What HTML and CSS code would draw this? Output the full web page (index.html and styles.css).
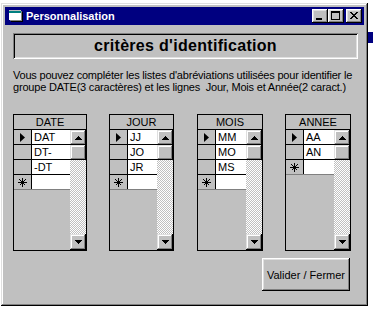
FILE: index.html
```html
<!DOCTYPE html>
<html lang="fr">
<head>
<meta charset="utf-8">
<title>Personnalisation</title>
<link rel="stylesheet" href="styles.css">
</head>
<body>
<div class="screen">
  <div class="window">
    <div class="titlebar">
      <svg class="appicon" width="14" height="12" viewBox="0 0 14 12" shape-rendering="crispEdges">
        <rect x="0" y="0" width="12" height="10" fill="#fff"/>
        <rect x="0" y="0" width="12" height="3" fill="#008080"/>
        <rect x="0" y="0" width="12" height="1" fill="#c0c0c0"/>
        <rect x="1" y="10" width="12" height="1" fill="#808080"/>
        <rect x="12" y="1" width="1" height="10" fill="#808080"/>
        <rect x="2" y="11" width="12" height="1" fill="#000"/>
        <rect x="13" y="2" width="1" height="10" fill="#000"/>
      </svg>
      <span class="title">Personnalisation</span>
      <div class="tbtns">
        <div class="tb"><svg width="16" height="14" viewBox="0 0 16 14" shape-rendering="crispEdges"><rect x="4" y="9" width="6" height="2" fill="#000"/></svg></div>
        <div class="tb"><svg width="16" height="14" viewBox="0 0 16 14" shape-rendering="crispEdges"><path d="M3 2h9v9H3z M4 4v6h7V4z" fill="#000" fill-rule="evenodd"/></svg></div>
        <div class="tb close"><svg width="16" height="14" viewBox="0 0 16 14" shape-rendering="crispEdges"><path d="M4 3h2v1h-2z M10 3h2v1h-2z M5 4h2v1h-2z M9 4h2v1h-2z M6 5h4v1h-4z M7 6h2v1h-2z M6 7h4v1h-4z M5 8h2v1h-2z M9 8h2v1h-2z M4 9h2v1h-2z M10 9h2v1h-2z" fill="#000"/></svg></div>
      </div>
    </div>

    <div class="content">
      <div class="heading">critères d'identification</div>
      <p class="intro">Vous pouvez compléter les listes d'abréviations utilisées pour identifier le<br>groupe DATE(3 caractères) et les lignes&nbsp; Jour, Mois et Année(2 caract.)</p>

      <div class="grids">
        <div class="grid g-date">
          <div class="ghead">DATE</div>
          <div class="gbody">
            <div class="rows">
              <div class="row"><div class="sel"><svg width="5" height="9" viewBox="0 0 5 9"><polygon points="0,0 5,4.5 0,9" fill="#000"/></svg></div><div class="cell">DAT</div></div>
              <div class="row"><div class="sel"></div><div class="cell">DT-</div></div>
              <div class="row"><div class="sel"></div><div class="cell">-DT</div></div>
              <div class="row new"><div class="sel"><svg width="9" height="9" viewBox="0 0 9 9" shape-rendering="crispEdges"><path d="M4.5 0v9M0 4.5h9M1.5 1.5l6 6M7.5 1.5l-6 6" stroke="#000" stroke-width="1"/><rect x="3" y="3" width="3" height="3" fill="#000"/></svg></div><div class="cell"></div></div>
            </div>
            <div class="vscroll">
              <div class="sbtn up"><svg width="7" height="4" viewBox="0 0 7 4" shape-rendering="crispEdges"><path d="M3 0h1v1H3z M2 1h3v1H2z M1 2h5v1H1z M0 3h7v1H0z" fill="#000"/></svg></div>
              <div class="thumb"></div>
              <div class="track"></div>
              <div class="sbtn down"><svg width="7" height="4" viewBox="0 0 7 4" shape-rendering="crispEdges"><path d="M0 0h7v1H0z M1 1h5v1H1z M2 2h3v1H2z M3 3h1v1H3z" fill="#000"/></svg></div>
            </div>
          </div>
        </div>

        <div class="grid g-jour">
          <div class="ghead">JOUR</div>
          <div class="gbody">
            <div class="rows">
              <div class="row"><div class="sel"><svg width="5" height="9" viewBox="0 0 5 9"><polygon points="0,0 5,4.5 0,9" fill="#000"/></svg></div><div class="cell">JJ</div></div>
              <div class="row"><div class="sel"></div><div class="cell">JO</div></div>
              <div class="row"><div class="sel"></div><div class="cell">JR</div></div>
              <div class="row new"><div class="sel"><svg width="9" height="9" viewBox="0 0 9 9" shape-rendering="crispEdges"><path d="M4.5 0v9M0 4.5h9M1.5 1.5l6 6M7.5 1.5l-6 6" stroke="#000" stroke-width="1"/><rect x="3" y="3" width="3" height="3" fill="#000"/></svg></div><div class="cell"></div></div>
            </div>
            <div class="vscroll">
              <div class="sbtn up"><svg width="7" height="4" viewBox="0 0 7 4" shape-rendering="crispEdges"><path d="M3 0h1v1H3z M2 1h3v1H2z M1 2h5v1H1z M0 3h7v1H0z" fill="#000"/></svg></div>
              <div class="thumb"></div>
              <div class="track"></div>
              <div class="sbtn down"><svg width="7" height="4" viewBox="0 0 7 4" shape-rendering="crispEdges"><path d="M0 0h7v1H0z M1 1h5v1H1z M2 2h3v1H2z M3 3h1v1H3z" fill="#000"/></svg></div>
            </div>
          </div>
        </div>

        <div class="grid g-mois">
          <div class="ghead">MOIS</div>
          <div class="gbody">
            <div class="rows">
              <div class="row"><div class="sel"><svg width="5" height="9" viewBox="0 0 5 9"><polygon points="0,0 5,4.5 0,9" fill="#000"/></svg></div><div class="cell">MM</div></div>
              <div class="row"><div class="sel"></div><div class="cell">MO</div></div>
              <div class="row"><div class="sel"></div><div class="cell">MS</div></div>
              <div class="row new"><div class="sel"><svg width="9" height="9" viewBox="0 0 9 9" shape-rendering="crispEdges"><path d="M4.5 0v9M0 4.5h9M1.5 1.5l6 6M7.5 1.5l-6 6" stroke="#000" stroke-width="1"/><rect x="3" y="3" width="3" height="3" fill="#000"/></svg></div><div class="cell"></div></div>
            </div>
            <div class="vscroll">
              <div class="sbtn up"><svg width="7" height="4" viewBox="0 0 7 4" shape-rendering="crispEdges"><path d="M3 0h1v1H3z M2 1h3v1H2z M1 2h5v1H1z M0 3h7v1H0z" fill="#000"/></svg></div>
              <div class="thumb"></div>
              <div class="track"></div>
              <div class="sbtn down"><svg width="7" height="4" viewBox="0 0 7 4" shape-rendering="crispEdges"><path d="M0 0h7v1H0z M1 1h5v1H1z M2 2h3v1H2z M3 3h1v1H3z" fill="#000"/></svg></div>
            </div>
          </div>
        </div>

        <div class="grid g-annee">
          <div class="ghead">ANNEE</div>
          <div class="gbody">
            <div class="rows">
              <div class="row"><div class="sel"><svg width="5" height="9" viewBox="0 0 5 9"><polygon points="0,0 5,4.5 0,9" fill="#000"/></svg></div><div class="cell">AA</div></div>
              <div class="row"><div class="sel"></div><div class="cell">AN</div></div>
              <div class="row new"><div class="sel"><svg width="9" height="9" viewBox="0 0 9 9" shape-rendering="crispEdges"><path d="M4.5 0v9M0 4.5h9M1.5 1.5l6 6M7.5 1.5l-6 6" stroke="#000" stroke-width="1"/><rect x="3" y="3" width="3" height="3" fill="#000"/></svg></div><div class="cell"></div></div>
            </div>
            <div class="vscroll">
              <div class="sbtn up"><svg width="7" height="4" viewBox="0 0 7 4" shape-rendering="crispEdges"><path d="M3 0h1v1H3z M2 1h3v1H2z M1 2h5v1H1z M0 3h7v1H0z" fill="#000"/></svg></div>
              <div class="thumb"></div>
              <div class="track"></div>
              <div class="sbtn down"><svg width="7" height="4" viewBox="0 0 7 4" shape-rendering="crispEdges"><path d="M0 0h7v1H0z M1 1h5v1H1z M2 2h3v1H2z M3 3h1v1H3z" fill="#000"/></svg></div>
            </div>
          </div>
        </div>
      </div>

      <div class="actions">
        <div class="btn">Valider / Fermer</div>
      </div>
    </div>
  </div>
  <div class="side"></div>
</div>
</body>
</html>
```

FILE: styles.css
```css
html, body {
  margin: 0;
  padding: 0;
}

body {
  background: #ffffff;
  font-family: "Liberation Sans", Arial, sans-serif;
  font-size: 11px;
  color: #000;
}

.screen {
  display: flex;
  align-items: flex-start;
}

.window {
  margin: 3px 0 0 1px;
  width: 367px;
  height: 303px;
  box-sizing: border-box;
  padding: 4px;
  background: #c0c0c0;
  box-shadow: inset -1px -1px #000, inset 1px 1px #dfdfdf, inset -2px -2px #808080, inset 2px 2px #fff;
  display: flex;
  flex-direction: column;
  flex: none;
}

.side {
  width: 5px;
  height: 11px;
  margin-top: 32px;
  background: #000080;
  flex: none;
}

/* title bar */
.titlebar {
  height: 18px;
  background: #000080;
  color: #fff;
  display: flex;
  align-items: center;
  flex: none;
}

.appicon {
  margin-left: 4px;
  display: block;
  flex: none;
}

.title {
  margin-left: 3px;
  font-weight: bold;
  font-size: 11px;
  line-height: 18px;
  white-space: nowrap;
}

.tbtns {
  margin-left: auto;
  display: flex;
  padding-right: 2px;
}

.tb {
  width: 16px;
  height: 14px;
  background: #c0c0c0;
  box-shadow: inset -1px -1px #000, inset 1px 1px #fff, inset -2px -2px #808080, inset 2px 2px #dfdfdf;
}

.tb svg {
  display: block;
}

.tb.close {
  margin-left: 2px;
}

/* content */
.content {
  padding: 8px 0 0 8px;
  display: flex;
  flex-direction: column;
  flex: 1;
}

.heading {
  width: 345px;
  height: 26px;
  box-sizing: border-box;
  box-shadow: inset 1px 1px #808080, inset -1px -1px #fff, inset 2px 2px #000, inset -2px -2px #dfdfdf;
  text-align: center;
  font-weight: bold;
  font-size: 16px;
  letter-spacing: 0.3px;
  line-height: 25px;
}

.intro {
  margin: 10px 0 0 0;
  font-size: 11px;
  line-height: 12px;
  letter-spacing: -0.2px;
  white-space: nowrap;
}

/* datasheets */
.grids {
  display: flex;
  margin-top: 21px;
}

.grid {
  height: 137px;
  box-sizing: border-box;
  border: 1px solid #000;
  background: #c0c0c0;
  display: flex;
  flex-direction: column;
  flex: none;
}

.g-date { width: 74px; }
.g-jour { width: 65px; margin-left: 22px; }
.g-mois { width: 66px; margin-left: 23px; }
.g-annee { width: 66px; margin-left: 22px; }

.ghead {
  height: 14px;
  line-height: 14px;
  border-bottom: 1px solid #000;
  text-align: center;
  font-size: 11px;
  flex: none;
}

.gbody {
  flex: 1;
  display: flex;
  min-height: 0;
}

.rows {
  flex: 1;
  display: flex;
  flex-direction: column;
}

.row {
  display: flex;
  height: 14px;
  border-bottom: 1px solid #000;
}

.row.new {
  border-bottom-color: #808080;
}

.sel {
  width: 17px;
  border-right: 1px solid #000;
  background: #c0c0c0;
  display: flex;
  align-items: center;
  justify-content: center;
  flex: none;
}

.sel svg {
  display: block;
}

.cell {
  flex: 1;
  background: #fff;
  padding-left: 2px;
  line-height: 14px;
  font-size: 11px;
}

.vscroll {
  width: 16px;
  display: flex;
  flex-direction: column;
  flex: none;
}

.sbtn,
.thumb {
  background: #c0c0c0;
  box-shadow: inset -1px -1px #000, inset 1px 1px #dfdfdf, inset -2px -2px #808080, inset 2px 2px #fff;
  flex: none;
}

.sbtn {
  display: flex;
  align-items: center;
  justify-content: center;
}

.sbtn svg {
  display: block;
}

.sbtn.up { height: 15px; }
.thumb { height: 15px; }
.sbtn.down { height: 16px; }

.track {
  flex: 1;
  background-color: #fff;
  background-image: repeating-conic-gradient(#c0c0c0 0 25%, #ffffff 0 50%);
  background-size: 2px 2px;
}

/* button */
.actions {
  display: flex;
  justify-content: flex-end;
  margin-top: 7px;
  padding-right: 14px;
}

.btn {
  width: 88px;
  height: 33px;
  box-sizing: border-box;
  background: #c0c0c0;
  box-shadow: inset -1px -1px #000, inset 1px 1px #fff, inset -2px -2px #808080, inset 2px 2px #dfdfdf;
  display: flex;
  align-items: center;
  justify-content: center;
  font-size: 11px;
  white-space: nowrap;
}
```
